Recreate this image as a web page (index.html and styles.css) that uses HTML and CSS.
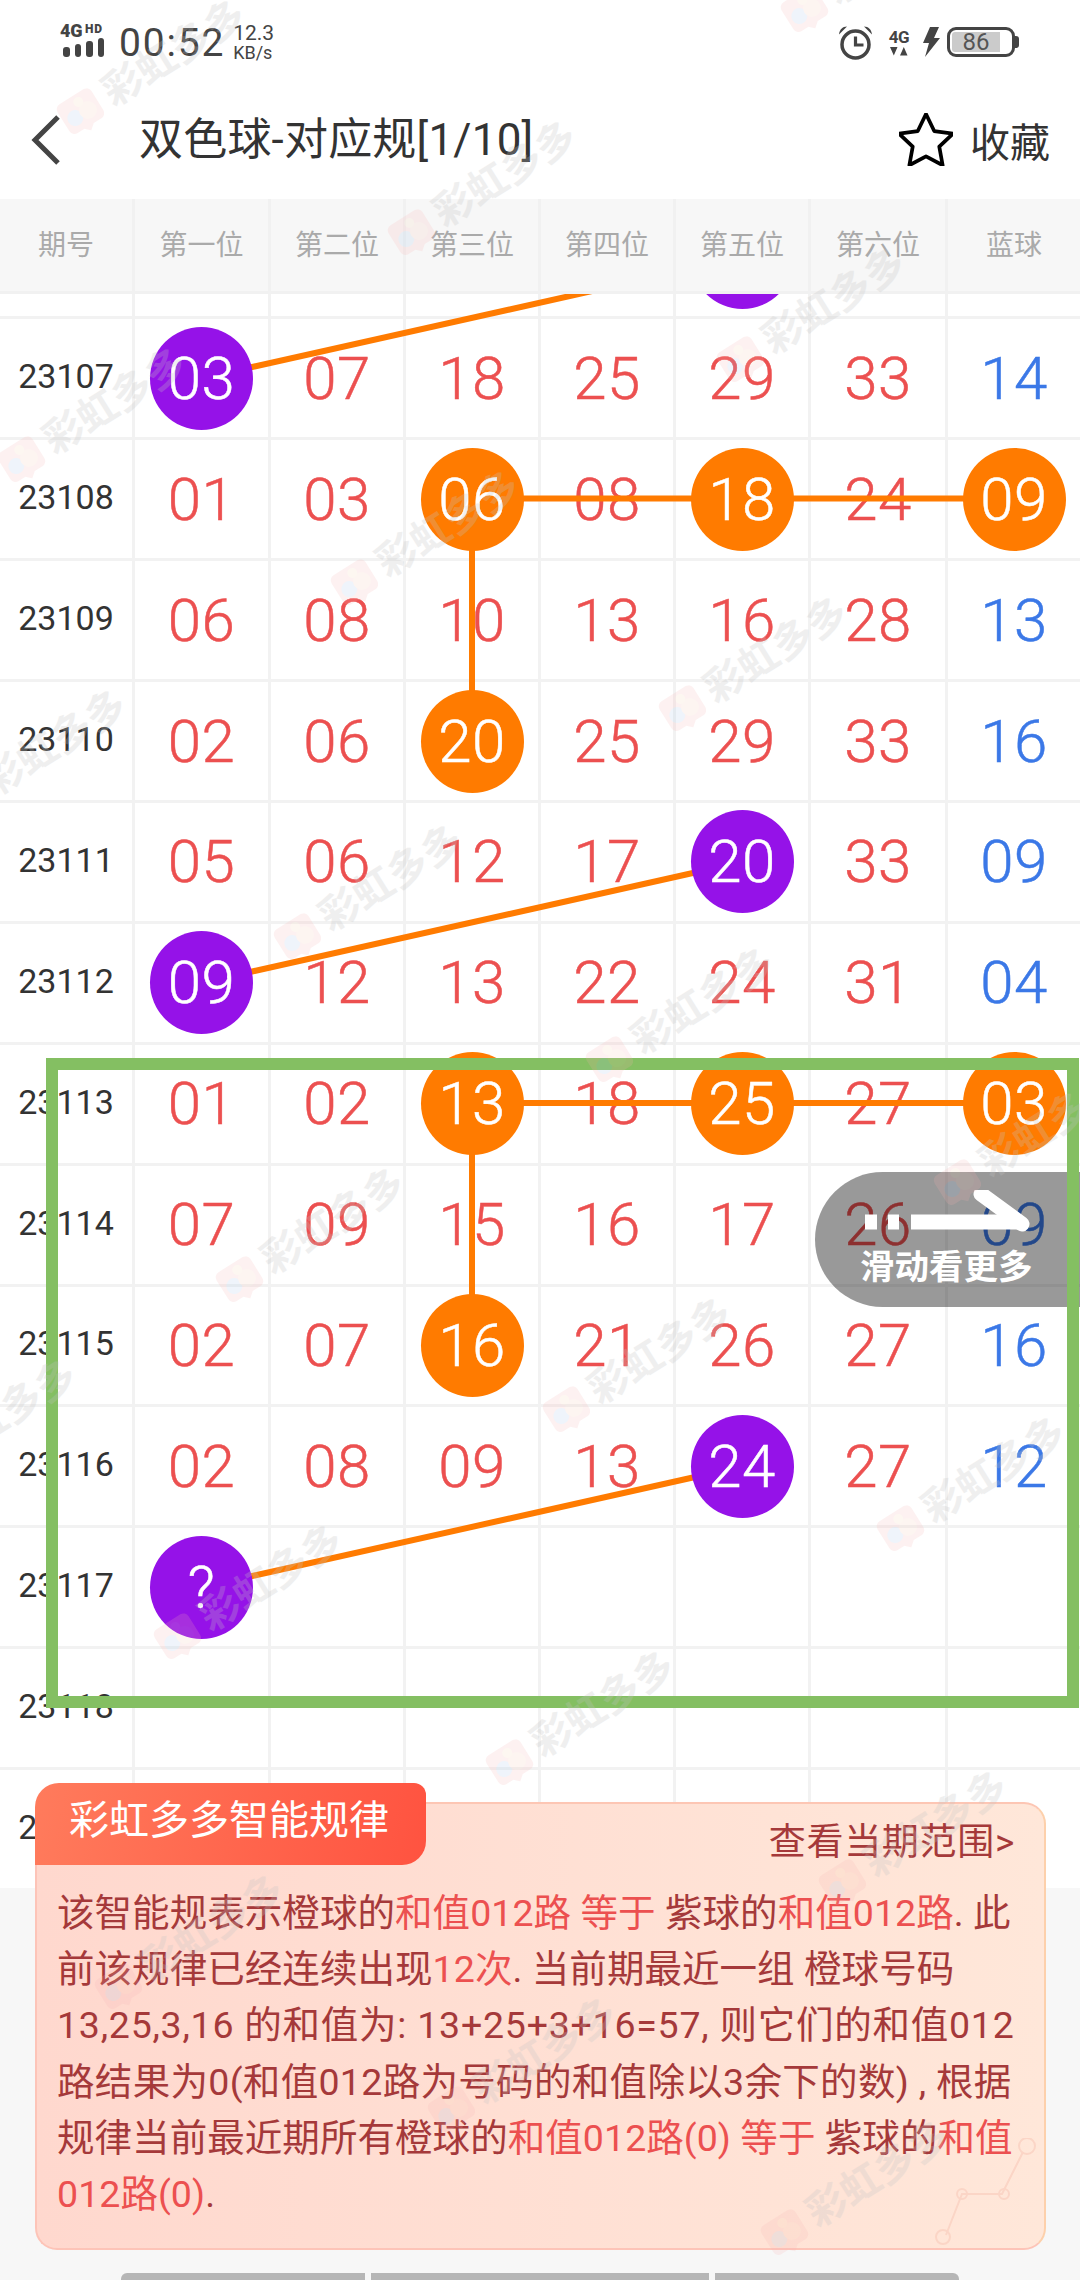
FILE: index.html
```html
<!DOCTYPE html>
<html lang="zh">
<head>
<meta charset="utf-8">
<title>双色球-对应规</title>
<link rel="stylesheet" href="styles.css">
</head>
<body>
<svg class="defs" width="0" height="0" aria-hidden="true">
  <symbol id="wm-logo" viewBox="0 0 44 44">
    <path d="M8 4h28a6 6 0 0 1 6 6v22a6 6 0 0 1-6 6H27l-6 5-5-5H8a6 6 0 0 1-6-6V10a6 6 0 0 1 6-6z" fill="#f9b4b4"/>
    <circle cx="14" cy="24" r="8" fill="#a9c8ec"/>
    <circle cx="29" cy="24" r="9" fill="#f7c9b8"/>
    <circle cx="25" cy="12" r="5" fill="#f8d8b8"/>
  </symbol>
</svg>

<header class="status">
  <div class="signal">
    <div class="net"><span class="net-4g">4G</span><span class="net-hd">HD</span></div>
    <div class="bars"><i class="b1"></i><i class="b2"></i><i class="b3"></i><i class="b4"></i></div>
  </div>
  <div class="time">00:52</div>
  <div class="speed"><span class="sp-num">12.3</span><span class="sp-unit">KB/s</span></div>
  <div class="status-right">
    <svg class="alarm" width="35" height="35" viewBox="0 0 35 35" fill="none" stroke="#444">
      <circle cx="17.5" cy="19.5" r="13.5" stroke-width="3.5"/>
      <path d="M17.5 11.5v8.5h8" stroke-width="3.2"/>
      <path d="M1 9.5 C1.5 4.5 4.5 1.5 9 1.5z M34 9.5 C33.5 4.5 30.5 1.5 26 1.5z" fill="#444" stroke="none"/>
    </svg>
    <div class="net2">
      <span class="net2-4g">4G</span>
      <svg width="20" height="9" viewBox="0 0 20 9"><path d="M1 0h7.500l-3.700 8.500zM11 8.500h7.500l-3.700-8.500z" fill="#444"/></svg>
    </div>
    <svg class="bolt" width="18" height="30" viewBox="0 0 18 30"><path d="M8 0h9l-5 11h6L3 30l4-14H1z" fill="#444"/></svg>
    <div class="batt"><span class="batt-fill"></span><span class="batt-num">86</span></div>
  </div>
</header>

<nav class="nav">
  <svg class="back" width="30" height="52" viewBox="0 0 30 52" fill="none"><path d="M27 3 4 26l23 23" stroke="#444" stroke-width="5"/></svg>
  <h1 class="title">双色球-对应规[1/10]</h1>
  <svg class="star" width="54" height="53" viewBox="1.500 1 48 47" fill="none"><path d="M27 3l7.300 15.200 16.700 2.300-12.200 11.600 3 16.500L27 40.700 12.200 48.600l3-16.500L3 20.500l16.700-2.300z" transform="translate(-1.500 -1.200)" stroke="#000" stroke-width="3.300" stroke-linejoin="round"/></svg>
  <span class="fav">收藏</span>
</nav>

<div class="thead">
  <div class="th">期号</div><div class="th">第一位</div><div class="th">第二位</div><div class="th">第三位</div><div class="th">第四位</div><div class="th">第五位</div><div class="th">第六位</div><div class="th last">蓝球</div>
</div>

<main class="tbody">
  <div class="rows">
    <div class="row"><div class="c p"></div><div class="c"></div><div class="c"></div><div class="c"></div><div class="c"></div><div class="c"><span class="ball pur"></span></div><div class="c"></div><div class="c last"></div></div>
    <div class="row"><div class="c p">23107</div><div class="c"><span class="ball pur">03</span></div><div class="c">07</div><div class="c">18</div><div class="c">25</div><div class="c">29</div><div class="c">33</div><div class="c last blue">14</div></div>
    <div class="row"><div class="c p">23108</div><div class="c">01</div><div class="c">03</div><div class="c"><span class="ball org">06</span></div><div class="c">08</div><div class="c"><span class="ball org">18</span></div><div class="c">24</div><div class="c last blue"><span class="ball org">09</span></div></div>
    <div class="row"><div class="c p">23109</div><div class="c">06</div><div class="c">08</div><div class="c">10</div><div class="c">13</div><div class="c">16</div><div class="c">28</div><div class="c last blue">13</div></div>
    <div class="row"><div class="c p">23110</div><div class="c">02</div><div class="c">06</div><div class="c"><span class="ball org">20</span></div><div class="c">25</div><div class="c">29</div><div class="c">33</div><div class="c last blue">16</div></div>
    <div class="row"><div class="c p">23111</div><div class="c">05</div><div class="c">06</div><div class="c">12</div><div class="c">17</div><div class="c"><span class="ball pur">20</span></div><div class="c">33</div><div class="c last blue">09</div></div>
    <div class="row"><div class="c p">23112</div><div class="c"><span class="ball pur">09</span></div><div class="c">12</div><div class="c">13</div><div class="c">22</div><div class="c">24</div><div class="c">31</div><div class="c last blue">04</div></div>
    <div class="row"><div class="c p">23113</div><div class="c">01</div><div class="c">02</div><div class="c"><span class="ball org">13</span></div><div class="c">18</div><div class="c"><span class="ball org">25</span></div><div class="c">27</div><div class="c last blue"><span class="ball org">03</span></div></div>
    <div class="row"><div class="c p">23114</div><div class="c">07</div><div class="c">09</div><div class="c">15</div><div class="c">16</div><div class="c">17</div><div class="c">26</div><div class="c last blue">09</div></div>
    <div class="row"><div class="c p">23115</div><div class="c">02</div><div class="c">07</div><div class="c"><span class="ball org">16</span></div><div class="c">21</div><div class="c">26</div><div class="c">27</div><div class="c last blue">16</div></div>
    <div class="row"><div class="c p">23116</div><div class="c">02</div><div class="c">08</div><div class="c">09</div><div class="c">13</div><div class="c"><span class="ball pur">24</span></div><div class="c">27</div><div class="c last blue">12</div></div>
    <div class="row"><div class="c p">23117</div><div class="c"><span class="ball pur">?</span></div><div class="c"></div><div class="c"></div><div class="c"></div><div class="c"></div><div class="c"></div><div class="c last"></div></div>
    <div class="row"><div class="c p">23118</div><div class="c"></div><div class="c"></div><div class="c"></div><div class="c"></div><div class="c"></div><div class="c"></div><div class="c last"></div></div>
    <div class="row"><div class="c p">23119</div><div class="c"></div><div class="c"></div><div class="c"></div><div class="c"></div><div class="c"></div><div class="c"></div><div class="c last"></div></div>
  </div>
  <svg class="links" width="1080" height="1594" viewBox="0 294 1080 1594" fill="none" stroke="#ff7b00" stroke-width="6">
    <path d="M201 378.500 742 257.500"/>
    <path d="M472 498.500H1014M472 498.500V741"/>
    <path d="M201 983 742 862"/>
    <path d="M472 1103H1014M472 1103V1345"/>
    <path d="M201 1587.500 742 1466.500"/>
  </svg>
</main>

<footer class="tabs"><i class="tab t1"></i><i class="tab t2"></i><i class="tab t3"></i></footer>

<section class="panel">
  <div class="badge">彩虹多多智能规律</div>
  <div class="more">查看当期范围&gt;</div>
  <p class="rule">该智能规表示橙球的<em>和值012路 等于</em> 紫球的<em>和值012路</em>. 此<br>前该规律已经连续出现<em>12次</em>. 当前期最近一组 橙球号码<br><span class="l3">13,25,3,16 的和值为: 13+25+3+16=57, 则它们的和值012</span><br><span class="l4">路结果为0(和值012路为号码的和值除以3余下的数) , 根据</span><br>规律当前最近期所有橙球的<em>和值012路(0) 等于</em> 紫球的<em>和值<br>012路(0)</em>.</p>
  <svg class="deco" width="110" height="110" viewBox="0 0 110 110" fill="none" stroke="#fbd5c6" stroke-width="2">
    <path d="M14 97 30 56H70L91 14"/>
    <circle cx="11" cy="99" r="7"/><circle cx="30" cy="56" r="5"/><circle cx="72" cy="56" r="5"/><circle cx="95" cy="8" r="8"/>
  </svg>
</section>

<aside class="hint">
  <svg class="arrow" width="170" height="50" viewBox="0 0 170 50" fill="none" stroke="#fff" stroke-width="15">
    <path d="M0 32H12M23 32H34M46 32H155"/>
    <path d="M116 4 157 34" stroke-linecap="round"/>
  </svg>
  <span class="hint-text">滑动看更多</span>
</aside>

<div class="focus"></div>

<div class="wm w1"><svg width="44" height="44"><use href="#wm-logo"/></svg><span>彩虹多多</span></div>
<div class="wm w2"><svg width="44" height="44"><use href="#wm-logo"/></svg><span>彩虹多多</span></div>
<div class="wm w3"><svg width="44" height="44"><use href="#wm-logo"/></svg><span>彩虹多多</span></div>
<div class="wm w4"><svg width="44" height="44"><use href="#wm-logo"/></svg><span>彩虹多多</span></div>
<div class="wm w5"><svg width="44" height="44"><use href="#wm-logo"/></svg><span>彩虹多多</span></div>
<div class="wm w6"><svg width="44" height="44"><use href="#wm-logo"/></svg><span>彩虹多多</span></div>
<div class="wm w7"><svg width="44" height="44"><use href="#wm-logo"/></svg><span>彩虹多多</span></div>
<div class="wm w8"><svg width="44" height="44"><use href="#wm-logo"/></svg><span>彩虹多多</span></div>
<div class="wm w9"><svg width="44" height="44"><use href="#wm-logo"/></svg><span>彩虹多多</span></div>
<div class="wm w10"><svg width="44" height="44"><use href="#wm-logo"/></svg><span>彩虹多多</span></div>
<div class="wm w11"><svg width="44" height="44"><use href="#wm-logo"/></svg><span>彩虹多多</span></div>
<div class="wm w12"><svg width="44" height="44"><use href="#wm-logo"/></svg><span>彩虹多多</span></div>
<div class="wm w13"><svg width="44" height="44"><use href="#wm-logo"/></svg><span>彩虹多多</span></div>
<div class="wm w14"><svg width="44" height="44"><use href="#wm-logo"/></svg><span>彩虹多多</span></div>
<div class="wm w15"><svg width="44" height="44"><use href="#wm-logo"/></svg><span>彩虹多多</span></div>
<div class="wm w16"><svg width="44" height="44"><use href="#wm-logo"/></svg><span>彩虹多多</span></div>
<div class="wm w17"><svg width="44" height="44"><use href="#wm-logo"/></svg><span>彩虹多多</span></div>
<div class="wm w18"><svg width="44" height="44"><use href="#wm-logo"/></svg><span>彩虹多多</span></div>
<div class="wm w19"><svg width="44" height="44"><use href="#wm-logo"/></svg><span>彩虹多多</span></div>
<div class="wm w20"><svg width="44" height="44"><use href="#wm-logo"/></svg><span>彩虹多多</span></div>
<div class="wm w21"><svg width="44" height="44"><use href="#wm-logo"/></svg><span>彩虹多多</span></div>
</body>
</html>
```

FILE: styles.css
```css
* { box-sizing: border-box; }
html, body { margin: 0; padding: 0; }
body {
  position: relative;
  width: 1080px;
  height: 2280px;
  overflow: hidden;
  background: #f7f7f7;
  color: #333;
  font-family: Roboto, "Noto Sans CJK SC", sans-serif;
}
.defs { position: absolute; }

/* status bar */
.status {
  display: flex;
  align-items: center;
  height: 80px;
  padding: 4px 65px 0 60px;
  background: #fff;
  color: #444;
}
.signal { display: flex; flex-direction: column; width: 46px; margin-top: -3px; }
.net { display: flex; align-items: flex-start; height: 14px; font-weight: 900; }
.net-4g { font-size: 18px; line-height: 14px; letter-spacing: -.3px; }
.net-hd { font-size: 12px; line-height: 10px; margin-left: 3px; letter-spacing: .8px; }
.bars { display: flex; align-items: flex-end; gap: 5px; height: 19px; margin: 0 0 0 3px; }
.bars i { display: block; width: 6.500px; background: #444; border-radius: 3px; }
.b1 { height: 10px; } .b2 { height: 13px; } .b3 { height: 16px; } .b4 { height: 19px; }
.time { margin: 2px 0 0 13px; font-size: 39px; letter-spacing: 1.800px; line-height: 44px; }
.speed { display: flex; flex-direction: column; margin: 2px 0 0 8px; font-size: 18px; line-height: 19px; }
.sp-num { font-size: 21px; }
.status-right { display: flex; align-items: center; margin-left: auto; }
.alarm { display: block; }
.net2 { display: flex; flex-direction: column; align-items: center; margin-left: 14px; width: 24px; }
.net2-4g { font-size: 17px; line-height: 18px; font-weight: 700; letter-spacing: -.5px; }
.net2 svg { display: block; margin-top: 1px; }
.bolt { margin-left: 11px; display: block; }
.batt {
  position: relative;
  display: flex;
  align-items: center;
  justify-content: center;
  width: 68px;
  height: 30px;
  margin-left: 7px;
  padding-right: 10px;
  border: 3px solid #444;
  border-radius: 9px;
  font-size: 24px;
}
.batt::after {
  content: "";
  position: absolute;
  right: -7px;
  top: 6px;
  width: 4px;
  height: 12px;
  background: #444;
  border-radius: 0 3px 3px 0;
}
.batt-fill { position: absolute; left: 2px; top: 2px; bottom: 2px; width: 48px; background: #cbcbcb; border-radius: 3px 0 0 3px; }
.batt-num { position: relative; color: #555; }

/* nav */
.nav {
  display: flex;
  align-items: center;
  height: 119px;
  padding-left: 31px;
  background: #fff;
}
.back { display: block; flex: none; }
.title { margin: 0 0 0 78px; font-size: 44px; font-weight: 400; color: #333; line-height: 60px; letter-spacing: .2px; }
.star { margin-left: auto; flex: none; display: block; }
.fav { margin: 0 30px 0 17px; font-size: 40px; color: #333; }

/* table */
.thead, .row {
  display: grid;
  grid-template-columns: 135px 136px 135px 135px 135px 135px 137px 132px;
}
.thead { height: 95px; background: #f7f7f7; border-bottom: 3px solid #f1f1f1; }
.th {
  display: flex;
  align-items: center;
  justify-content: center;
  padding-bottom: 4px;
  border-right: 3px solid #f1f1f1;
  color: #aaa;
  font-size: 28px;
}
.th.last, .c.last { border-right: 0; }
.tbody { position: relative; height: 1594px; overflow: hidden; background: #fff; }
.rows { margin-top: -95.500px; }
.row { height: 120.900px; border-bottom: 3px solid #f2f2f2; }
.c {
  display: flex;
  align-items: center;
  justify-content: center;
  border-right: 3px solid #f2f2f2;
  color: #ec5050;
  font-size: 60px;
  font-weight: 300;
  letter-spacing: .5px;
  -webkit-text-stroke: .5px currentColor;
}
.c.p { color: #333; font-size: 34px; font-weight: 400; letter-spacing: 0; padding-bottom: 4px; -webkit-text-stroke: 0; }
.c.blue { color: #3b78e7; }
.ball {
  position: relative;
  z-index: 2;
  display: flex;
  align-items: center;
  justify-content: center;
  width: 103px;
  height: 103px;
  border-radius: 50%;
  color: #fff;
}
.pur { background: #9512e8; }
.org { background: #ff7b00; }
.links { position: absolute; left: 0; top: 0; z-index: 1; }

/* bottom tab strip */
.tabs { display: flex; gap: 6px; margin: 385px 0 0 121px; }
.tab { display: block; height: 7px; background: #b6b6b6; }
.t1 { width: 244px; border-radius: 6px 0 0 0; }
.t2 { width: 338px; }
.t3 { width: 244px; border-radius: 0 6px 0 0; }

/* rule panel */
.panel {
  position: absolute;
  z-index: 3;
  left: 35px;
  top: 1802px;
  width: 1011px;
  height: 448px;
  padding: 11px 29px 0 22px;
  border: 2px solid;
  border-color: #fdc6b4 #fdd0ab #fdc4b8 #fdc4b8;
  border-radius: 22px;
  background: linear-gradient(90deg, #ffd8ce, #ffe7d9);
  color: #a5393a;
}
.badge {
  position: absolute;
  left: -2px;
  top: -21px;
  width: 391px;
  height: 82px;
  padding-left: 34px;
  border-radius: 24px 12px 24px 0;
  background: linear-gradient(100deg, #ff7b5c, #ff5340);
  color: #fff;
  font-size: 40px;
  line-height: 76px;
}
.more { font-size: 37px; line-height: 56px; text-align: right; letter-spacing: .7px; }
.rule { margin: 14px 0 0 -2px; font-size: 37.500px; letter-spacing: .06px; line-height: 56.200px; white-space: nowrap; }
.rule em { font-style: normal; color: #ec5050; }
.l3 { letter-spacing: .76px; }
.l4 { letter-spacing: .32px; }
.deco { position: absolute; right: 2px; bottom: 0; }

/* scroll hint */
.hint {
  position: absolute;
  z-index: 4;
  left: 815px;
  top: 1172px;
  width: 265px;
  height: 135px;
  border-radius: 67.500px 0 0 67.500px;
  background: rgba(0, 0, 0, .4);
}
.arrow { position: absolute; left: 50px; top: 18px; display: block; }
.hint-text {
  position: absolute;
  left: 45px;
  top: 70px;
  color: #fff;
  font-size: 34.500px;
  font-weight: 700;
  line-height: 50px;
}

/* green annotation frame */
.focus {
  position: absolute;
  z-index: 5;
  left: 46px;
  top: 1058px;
  width: 1033px;
  height: 650px;
  border: 12px solid #84bf62;
}

/* watermarks */
.wm {
  position: absolute;
  z-index: 6;
  display: flex;
  align-items: center;
  gap: 8px;
  transform: rotate(-32deg);
  transform-origin: 22px 22px;
  opacity: .26;
  pointer-events: none;
}
.wm svg { display: block; flex: none; opacity: .7; }
.wm span { color: #c4c4c4; font-size: 40px; font-weight: 700; line-height: 44px; white-space: nowrap; }
.w1 { left: 59px; top: 90px; }
.w2 { left: 390px; top: 211px; }
.w3 { left: 783px; top: -12px; }
.w4 { left: 719px; top: 338px; }
.w5 { left: 0; top: 438px; }
.w6 { left: 333px; top: 561px; }
.w7 { left: 276px; top: 915px; }
.w8 { left: 661px; top: 687px; }
.w9 { left: -60px; top: 780px; }
.w10 { left: 588px; top: 1038px; }
.w11 { left: 936px; top: 1161px; }
.w12 { left: 218px; top: 1258px; }
.w13 { left: 545px; top: 1388px; }
.w14 { left: 879px; top: 1507px; }
.w15 { left: -110px; top: 1450px; }
.w16 { left: 156px; top: 1615px; }
.w17 { left: 488px; top: 1741px; }
.w18 { left: 97px; top: 1965px; }
.w19 { left: 430px; top: 2088px; }
.w20 { left: 821px; top: 1861px; }
.w21 { left: 763px; top: 2211px; }
```
